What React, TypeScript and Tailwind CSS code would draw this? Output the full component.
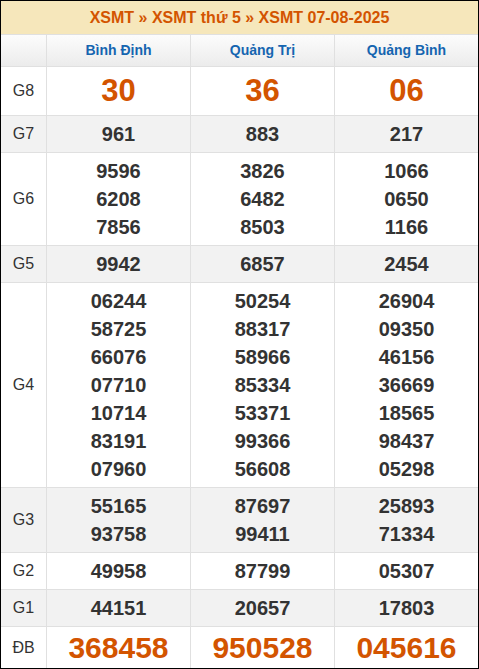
const provinces = ["Bình Định", "Quảng Trị", "Quảng Bình"];

type Row = {
  label: string;
  values: string[][];
  big?: boolean;
  shade?: boolean;
};

const rows: Row[] = [
  { label: "G8", values: [["30"], ["36"], ["06"]], big: true },
  { label: "G7", values: [["961"], ["883"], ["217"]], shade: true },
  {
    label: "G6",
    values: [
      ["9596", "6208", "7856"],
      ["3826", "6482", "8503"],
      ["1066", "0650", "1166"],
    ],
  },
  { label: "G5", values: [["9942"], ["6857"], ["2454"]], shade: true },
  {
    label: "G4",
    values: [
      ["06244", "58725", "66076", "07710", "10714", "83191", "07960"],
      ["50254", "88317", "58966", "85334", "53371", "99366", "56608"],
      ["26904", "09350", "46156", "36669", "18565", "98437", "05298"],
    ],
  },
  {
    label: "G3",
    values: [
      ["55165", "93758"],
      ["87697", "99411"],
      ["25893", "71334"],
    ],
    shade: true,
  },
  { label: "G2", values: [["49958"], ["87799"], ["05307"]] },
  { label: "G1", values: [["44151"], ["20657"], ["17803"]], shade: true },
  { label: "ĐB", values: [["368458"], ["950528"], ["045616"]], big: true },
];

export default function App() {
  return (
    <div className="w-[479px] h-[669px] bg-white font-['Liberation_Sans',Arial,sans-serif]">
      <div className="border border-black h-full flex flex-col">
        <div className="h-[33px] bg-[#f6e7bb] flex items-center justify-center text-[16px] font-bold text-[#d35400]">
          XSMT » XSMT thứ 5 » XSMT 07-08-2025
        </div>
        <div className="flex h-[33px] border-t border-b border-[#e0e0e0] bg-gradient-to-b from-[#fcfcfc] to-[#ececec]">
          <div className="w-[45px]" />
          {provinces.map((p) => (
            <div
              key={p}
              className="flex-1 border-l border-[#e0e0e0] flex items-center justify-center text-[14px] font-bold text-[#1565b0]"
            >
              {p}
            </div>
          ))}
        </div>
        {rows.map((row, i) => (
          <div
            key={row.label}
            className={`flex ${i < rows.length - 1 ? "border-b border-[#e0e0e0]" : "flex-1"} ${row.shade ? "bg-[#f2f2f2]" : "bg-white"}`}
          >
            <div className="w-[45px] flex items-center justify-center text-[16px] text-[#333]">
              {row.label}
            </div>
            {row.values.map((vals, j) => (
              <div
                key={j}
                className={`flex-1 border-l border-[#e0e0e0] flex flex-col items-center justify-center ${row.big ? "py-[4px]" : "py-[4px]"}`}
              >
                {vals.map((v) => (
                  <div
                    key={v}
                    className={
                      row.big
                        ? `font-bold text-[#d35400] ${row.label === "G8" ? "text-[31px] leading-[40px]" : "text-[30px] leading-[32px]"}`
                        : "font-bold text-[20px] leading-[28px] text-[#333]"
                    }
                  >
                    {v}
                  </div>
                ))}
              </div>
            ))}
          </div>
        ))}
      </div>
    </div>
  );
}
